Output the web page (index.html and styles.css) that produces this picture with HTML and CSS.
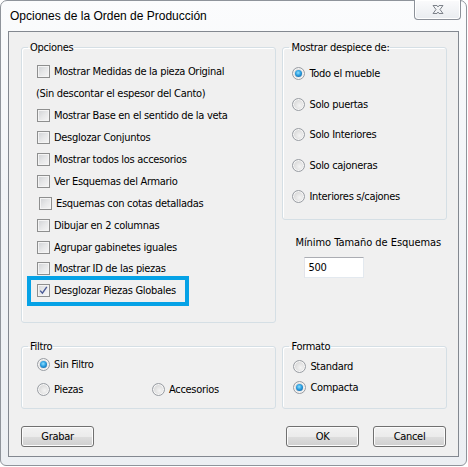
FILE: index.html
```html
<!DOCTYPE html>
<html lang="es">
<head>
<meta charset="utf-8">
<title>Opciones de la Orden de Producción</title>
<link rel="stylesheet" href="styles.css">
</head>
<body>
<div class="window">
  <div class="titlebar">
    <span class="title">Opciones de la Orden de Producción</span>
    <div class="close">
      <svg width="14" height="11" viewBox="0 0 14 11"><path d="M2 1.5 L6 1.5 L7 3 L8 1.5 L12 1.5 L9 5.5 L12 9.5 L8 9.5 L7 8 L6 9.5 L2 9.5 L5 5.5 Z" fill="none" stroke="#7d828a" stroke-width="1"/></svg>
    </div>
  </div>
  <div class="client">
    <div class="top">
      <fieldset class="group opciones">
        <legend>Opciones</legend>
        <div class="row"><span class="cb"></span><span>Mostrar Medidas de la pieza Original</span></div>
        <div class="row note"><span>(Sin descontar el espesor del Canto)</span></div>
        <div class="row"><span class="cb"></span><span>Mostrar Base en el sentido de la veta</span></div>
        <div class="row"><span class="cb"></span><span>Desglozar Conjuntos</span></div>
        <div class="row"><span class="cb"></span><span>Mostrar todos los accesorios</span></div>
        <div class="row"><span class="cb"></span><span>Ver Esquemas del Armario</span></div>
        <div class="row shifted"><span class="cb"></span><span>Esquemas con cotas detalladas</span></div>
        <div class="row"><span class="cb"></span><span>Dibujar en 2 columnas</span></div>
        <div class="row"><span class="cb"></span><span>Agrupar gabinetes iguales</span></div>
        <div class="row"><span class="cb"></span><span>Mostrar ID de las piezas</span></div>
        <div class="row highlight"><span class="cb checked"><svg width="11" height="11" viewBox="0 0 11 11"><path d="M2.2 5.6 L4.4 8.2 L8.8 1.8" fill="none" stroke="#4a5a96" stroke-width="1.4"/></svg></span><span>Desglozar Piezas Globales</span></div>
      </fieldset>
      <div class="rightcol">
        <fieldset class="group despiece">
          <legend>Mostrar despiece de:</legend>
          <div class="rrow"><span class="rb on"></span><span>Todo el mueble</span></div>
          <div class="rrow"><span class="rb"></span><span>Solo puertas</span></div>
          <div class="rrow"><span class="rb"></span><span>Solo Interiores</span></div>
          <div class="rrow"><span class="rb"></span><span>Solo cajoneras</span></div>
          <div class="rrow"><span class="rb"></span><span>Interiores s/cajones</span></div>
        </fieldset>
        <div class="minimo">
          <div class="minlabel">Mínimo Tamaño de Esquemas</div>
          <div class="input">500</div>
        </div>
      </div>
    </div>
    <div class="mid">
      <fieldset class="group filtro">
        <legend>Filtro</legend>
        <div class="frow"><span class="opt"><span class="rb on"></span><span>Sin Filtro</span></span></div>
        <div class="frow two"><span class="opt piezas"><span class="rb"></span><span>Piezas</span></span><span class="opt"><span class="rb"></span><span>Accesorios</span></span></div>
      </fieldset>
      <fieldset class="group formato">
        <legend>Formato</legend>
        <div class="fmrow"><span class="rb"></span><span>Standard</span></div>
        <div class="fmrow"><span class="rb on"></span><span>Compacta</span></div>
      </fieldset>
    </div>
    <div class="buttons">
      <div class="btn">Grabar</div>
      <div class="right-buttons">
        <div class="btn">OK</div>
        <div class="btn">Cancel</div>
      </div>
    </div>
  </div>
</div>
</body>
</html>
```
FILE: styles.css
```css
* { box-sizing: border-box; }
html, body { margin: 0; padding: 0; background: #ffffff; }
body { width: 468px; height: 467px; overflow: hidden; }

.window {
  width: 467px;
  height: 466px;
  border: 1px solid #8f949b;
  border-radius: 7px 7px 6px 6px;
  background: linear-gradient(to bottom, #fbfcfd 0%, #f2f4f7 40%, #eceff3 100%);
  display: flex;
  flex-direction: column;
  font-family: "DejaVu Sans Condensed", "Liberation Sans", sans-serif;
  font-size: 11px;
  letter-spacing: -0.3px;
  color: #000;
}

.titlebar {
  height: 30px;
  display: flex;
  align-items: flex-start;
  justify-content: space-between;
  flex: none;
}
.title {
  font-family: "Liberation Sans", "Noto Sans", sans-serif;
  font-size: 12px;
  letter-spacing: 0;
  padding: 8px 0 0 9px;
  color: #000;
}
.close {
  width: 47px;
  height: 20px;
  margin: -1px 5px 0 0;
  border: 1px solid #8c9199;
  border-top: none;
  border-radius: 0 0 4px 4px;
  background: linear-gradient(to bottom, #fbfbfc, #e9ecf0);
  box-shadow: inset 0 0 0 1px #ffffff;
  display: flex;
  align-items: center;
  justify-content: center;
}

.client {
  flex: 1;
  margin: 0 7px 8px 7px;
  border: 1px solid #838890;
  background: #f0f0f0;
  padding: 9px 11px 0 12px;
  display: flex;
  flex-direction: column;
}

.top {
  display: flex;
  gap: 6px;
  height: 282px;
}

.group {
  margin: 0;
  border: 1px solid #d5dfe5;
  border-radius: 3px;
  padding: 0 0 0 6px;
  box-shadow: inset 1px 1px 0 #ffffff;
}
.group legend {
  padding: 0 1px 0 2px;
  line-height: 13px;
}

.opciones {
  width: 256px;
  padding-top: 7px;
}
.row {
  height: 21.9px;
  display: flex;
  align-items: center;
  gap: 4px;
  padding-left: 9px;
}
.row.note { padding-left: 8px; }
.row.shifted { padding-left: 11px; }
.row.highlight {
  width: 154px;
  margin-left: 3px;
  padding-left: 6px;
  outline: 4px solid #05a2e6;
}

.cb {
  width: 13px;
  height: 13px;
  flex: none;
  border: 1px solid #8e8f8f;
  background: linear-gradient(135deg, #cfd1d4 0%, #e6e7e8 50%, #f6f6f6 100%);
  box-shadow: inset 0 0 0 1px #f4f4f4;
  display: flex;
  align-items: center;
  justify-content: center;
}
.cb.checked {
  background: linear-gradient(135deg, #d4d6da 0%, #eaebec 50%, #f7f7f7 100%);
}

.rb {
  width: 13px;
  height: 13px;
  flex: none;
  border-radius: 50%;
  border: 1px solid #999da3;
  background: radial-gradient(circle at 60% 60%, #f4f4f4 0%, #dcdcdc 60%, #cfcfcf 100%);
  box-shadow: inset 0 0 0 1px #f7f7f7;
  position: relative;
}
.rb.on::after {
  content: "";
  position: absolute;
  left: 2px;
  top: 2px;
  width: 7px;
  height: 7px;
  border-radius: 50%;
  background: radial-gradient(circle at 45% 40%, #8fe0ff 0%, #2a9ee0 45%, #0d4f8e 100%);
}

.rightcol {
  width: 165px;
  display: flex;
  flex-direction: column;
}
.despiece {
  height: 179px;
  padding-top: 4px;
}
.rrow {
  height: 30.8px;
  display: flex;
  align-items: center;
  gap: 4px;
  padding-left: 3px;
}
.minimo {
  padding: 16px 0 0 13px;
}
.minlabel {
  line-height: 13px;
  letter-spacing: -0.05px;
  white-space: nowrap;
}
.input {
  margin: 8px 0 0 9px;
  width: 60px;
  height: 21px;
  background: #ffffff;
  border: 1px solid #e3e9ef;
  border-top-color: #abadb3;
  border-left-color: #e2e3ea;
  padding: 3px 0 0 3px;
}

.mid {
  display: flex;
  gap: 6px;
  margin-top: 17px;
  height: 69px;
}
.filtro {
  width: 256px;
  padding-left: 6px;
}
.frow {
  height: 22px;
  display: flex;
  align-items: center;
  padding-left: 9px;
}
.frow.two { height: 28px; }
.opt {
  display: flex;
  align-items: center;
  gap: 4px;
}
.piezas { width: 115px; }
.formato {
  width: 165px;
}
.fmrow {
  height: 21px;
  display: flex;
  align-items: center;
  gap: 4px;
  padding-left: 4px;
}
.fmrow:first-of-type { margin-top: 3px; }

.buttons {
  margin-top: 17px;
  display: flex;
  justify-content: space-between;
  padding-right: 1px;
}
.right-buttons {
  display: flex;
  gap: 14px;
}
.btn {
  width: 73px;
  height: 21px;
  border: 1px solid #707070;
  border-radius: 3px;
  background: linear-gradient(to bottom, #f2f2f2 0%, #ebebeb 50%, #dddddd 51%, #cfcfcf 100%);
  box-shadow: inset 0 0 0 1px #fcfcfc;
  display: flex;
  align-items: center;
  justify-content: center;
}
```
